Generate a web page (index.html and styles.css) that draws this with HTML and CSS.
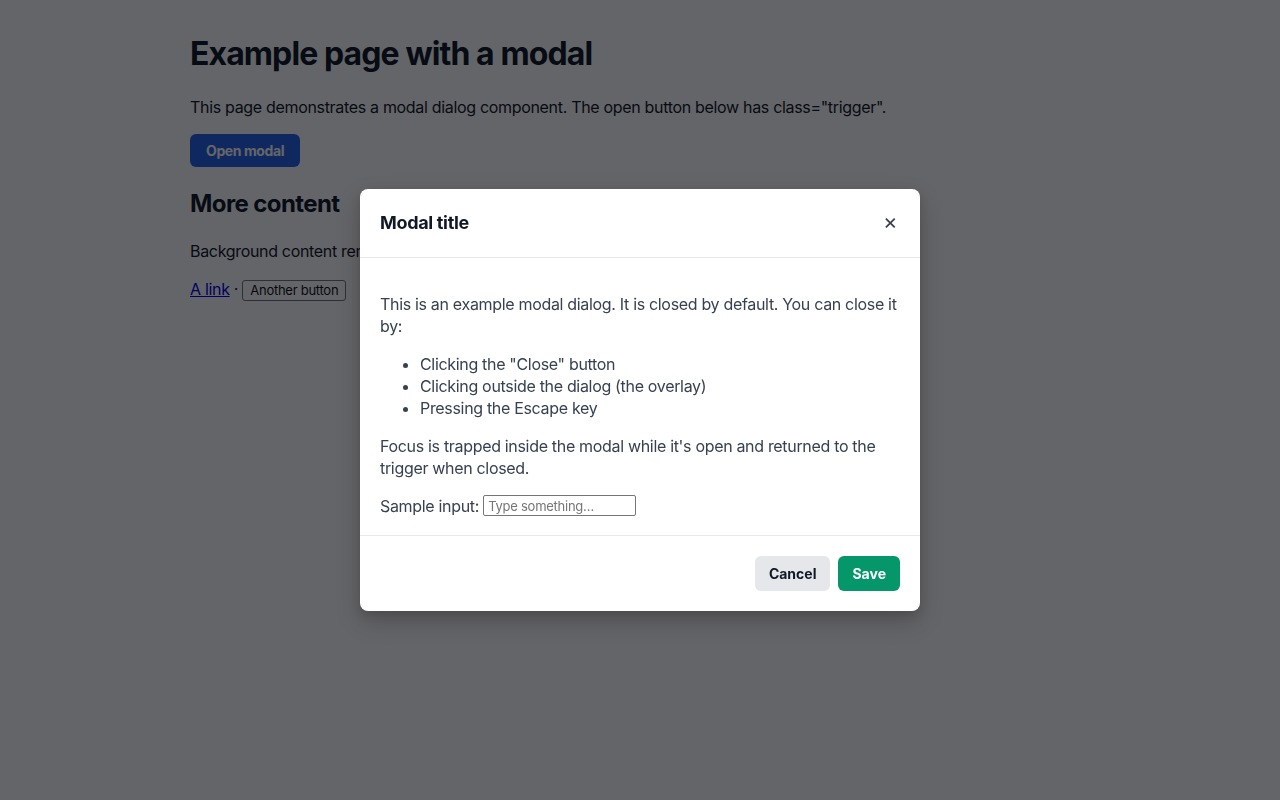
FILE: index.html
```html
<!DOCTYPE html>
<html lang="en"><head>
  <meta charset="UTF-8">
  <meta name="viewport" content="width=device-width,initial-scale=1.0">
  <title>Modal example</title>
  <link rel="stylesheet" href="styles.css">
</head><body>
<div class="page">
  <h1>Example page with a modal</h1>
  <p>This page demonstrates a modal dialog component. The open button below has class="trigger".</p>
  <button class="trigger" type="button">Open modal</button>
  <h2>More content</h2>
  <p>Background content remains visible behind the overlay.</p>
  <p><a href="#">A link</a> · <button class="plain" type="button">Another button</button></p>
</div>

<div class="overlay">
  <div class="modal" role="dialog" aria-modal="true" aria-labelledby="modal-title">
    <div class="modal-head">
      <h3 id="modal-title">Modal title</h3>
      <button class="close" type="button" aria-label="Close">&times;</button>
    </div>
    <div class="modal-body">
      <p>This is an example modal dialog. It is closed by default. You can close it by:</p>
      <ul>
        <li>Clicking the "Close" button</li>
        <li>Clicking outside the dialog (the overlay)</li>
        <li>Pressing the Escape key</li>
      </ul>
      <p>Focus is trapped inside the modal while it's open and returned to the trigger when closed.</p>
      <label class="field">Sample input: <input type="text" placeholder="Type something…"></label>
    </div>
    <div class="modal-foot">
      <button class="btn cancel" type="button">Cancel</button>
      <button class="btn save" type="button">Save</button>
    </div>
  </div>
</div>
</body>
</html>
```

FILE: styles.css
```css
html,body{
  margin:0;
  background:#fff;
}
body{
  font-family:Inter,"Noto Sans",sans-serif;
  font-size:16px;
  letter-spacing:-0.02em;
  color:#111827;
}
button,input{
  letter-spacing:-0.02em;
}
.page{
  max-width:900px;
  margin:0 auto;
  padding-top:34px;
}
.page h1{
  font-size:32px;
  line-height:40px;
  margin:0 0 22px;
  letter-spacing:-0.9px;
}
.page p{
  line-height:22px;
  margin:0 0 16px;
}
.page h2{
  font-size:24px;
  line-height:30px;
  margin:22px 0 21px;
  letter-spacing:-0.6px;
}
.page a{
  color:#0000ee;
}
.trigger{
  font:700 14px/17px Inter,sans-serif;
  letter-spacing:-0.4px;
  background:#2563eb;
  color:#fff;
  border:none;
  border-radius:6px;
  padding:8px 16px;
}
.plain{
  font:13px/17px Inter,sans-serif;
  background:#fff;
  color:#111;
  border:1px solid #767676;
  border-radius:3px;
  padding:1px 7px;
}

.overlay{
  position:fixed;
  inset:0;
  background:rgba(2,4,8,0.61);
  display:flex;
  align-items:center;
  justify-content:center;
}
.modal{
  width:560px;
  background:#fff;
  border-radius:8px;
  box-shadow:0 10px 25px rgba(0,0,0,0.2),0 4px 10px rgba(0,0,0,0.1);
  color:#374151;
}
.modal-head{
  display:flex;
  align-items:center;
  justify-content:space-between;
  padding:20px;
  border-bottom:1px solid #e5e7eb;
}
.modal-head h3{
  margin:0;
  font-size:18px;
  line-height:28px;
  color:#111827;
}
.close{
  border:none;
  background:transparent;
  color:#374151;
  font:400 22px/24px Inter,sans-serif;
  padding:0 3px 4px 2px;
  cursor:pointer;
}
.modal-body{
  padding:19px 20px 18px;
  line-height:22px;
}
.modal-body p{
  margin:16px 0;
}
.modal-body ul{
  margin:15px 0 16px;
  padding-left:40px;
}
.field{
  display:block;
  margin-top:15px;
  height:22px;
}
.field input{
  font:13px Inter,sans-serif;
  width:143px;
  height:17px;
  padding:1px 4px;
  border:1px solid #767676;
  border-radius:2px;
  vertical-align:top;
}
.field input::placeholder{
  color:#757575;
}
.modal-foot{
  display:flex;
  justify-content:flex-end;
  gap:8px;
  padding:20px;
  border-top:1px solid #e5e7eb;
}
.btn{
  font:700 14px/19px Inter,sans-serif;
  letter-spacing:0;
  border:none;
  border-radius:6px;
  padding:8px 14px;
}
.cancel{
  background:#e5e7eb;
  color:#111827;
}
.save{
  background:#059669;
  color:#fff;
}
```
